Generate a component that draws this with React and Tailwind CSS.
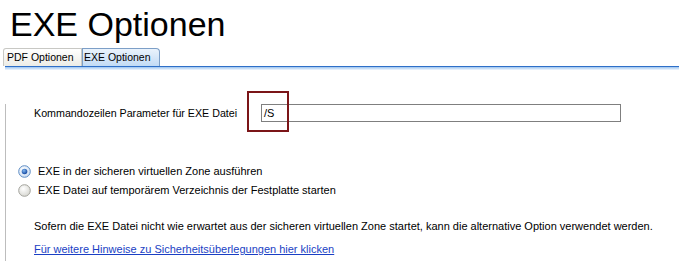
import React from 'react';

const Radio = ({ checked }) => (
    <svg width="13" height="13" viewBox="0 0 13 13" className="shrink-0">
        <defs>
            <radialGradient id={checked ? 'rg-on' : 'rg-off'} cx="40%" cy="35%" r="70%">
                <stop offset="0%" stopColor="#ffffff" />
                <stop offset="100%" stopColor={checked ? '#c9dcf2' : '#d6d6d0'} />
            </radialGradient>
            <radialGradient id="dot" cx="40%" cy="35%" r="70%">
                <stop offset="0%" stopColor="#7fb6f0" />
                <stop offset="100%" stopColor="#0b3f9a" />
            </radialGradient>
        </defs>
        <circle cx="6.5" cy="6.5" r="5.8" fill={`url(#${checked ? 'rg-on' : 'rg-off'})`} stroke={checked ? '#5f8dc4' : '#a3a39c'} strokeWidth="1" />
        {checked && <circle cx="6.5" cy="6.5" r="2.8" fill="url(#dot)" />}
    </svg>
);

const App = () => {
    return (
        <div className="w-[679px] h-[261px] overflow-hidden bg-white text-black font-['Liberation_Sans',Arial,sans-serif]">
            {/* Title */}
            <h1 className="pl-[10px] pt-[4px] text-[34px] leading-[40px] font-normal">EXE Optionen</h1>

            {/* Tabs */}
            <div className="mt-[4px] flex h-[18px] items-end text-[10.5px] leading-none">
                <div className="ml-[3px] flex h-[18px] w-[79px] items-center pl-[3px] border border-b-0 border-[#c8c8c4] rounded-tl-[3px] bg-gradient-to-b from-white to-[#ececE6]">
                    PDF Optionen
                </div>
                <div className="flex h-[18px] w-[78px] items-center pl-[1px] border border-b-0 border-[#7d9fc7] rounded-tr-[4px] bg-gradient-to-b from-[#eaf3fc] to-[#c2dbf5]">
                    EXE Optionen
                </div>
            </div>
            <div className="ml-[5px] h-[1px] bg-[#2e6fc8]" />
            <div className="ml-[5px] h-[3px] bg-gradient-to-b from-[#9cc4ef] to-[#f2f7fd]" />

            {/* Panel */}
            <div className="ml-[5px] h-[200px] border-l border-[#bdbdbd] text-[11px]">
                <div className="mt-[34px] flex h-[18px] items-center">
                    <span className="ml-[28px] w-[227px] text-[10.7px]">Kommandozeilen Parameter für EXE Datei</span>
                    <div className="relative">
                        <div className="flex h-[18px] w-[360px] items-center border border-[#7f7f7f] pl-[2px]">/S</div>
                        <div className="absolute left-[-14px] top-[-13px] h-[41px] w-[42px] border-2 border-[#7b1518]" />
                    </div>
                </div>

                <div className="mt-[40px] flex h-[19px] items-center gap-[7px] pl-[12px]">
                    <Radio checked />
                    <span>EXE in der sicheren virtuellen Zone ausführen</span>
                </div>
                <div className="flex h-[19px] items-center gap-[7px] pl-[12px]">
                    <Radio />
                    <span>EXE Datei auf temporärem Verzeichnis der Festplatte starten</span>
                </div>

                <p className="mt-[18px] ml-[28px] leading-[16px]">
                    Sofern die EXE Datei nicht wie erwartet aus der sicheren virtuellen Zone startet, kann die alternative Option verwendet werden.
                </p>
                <a href="#" className="mt-[7px] ml-[28px] block leading-[16px] text-[#1a3fc4] underline">
                    Für weitere Hinweise zu Sicherheitsüberlegungen hier klicken
                </a>
            </div>
        </div>
    );
};

export default App;
